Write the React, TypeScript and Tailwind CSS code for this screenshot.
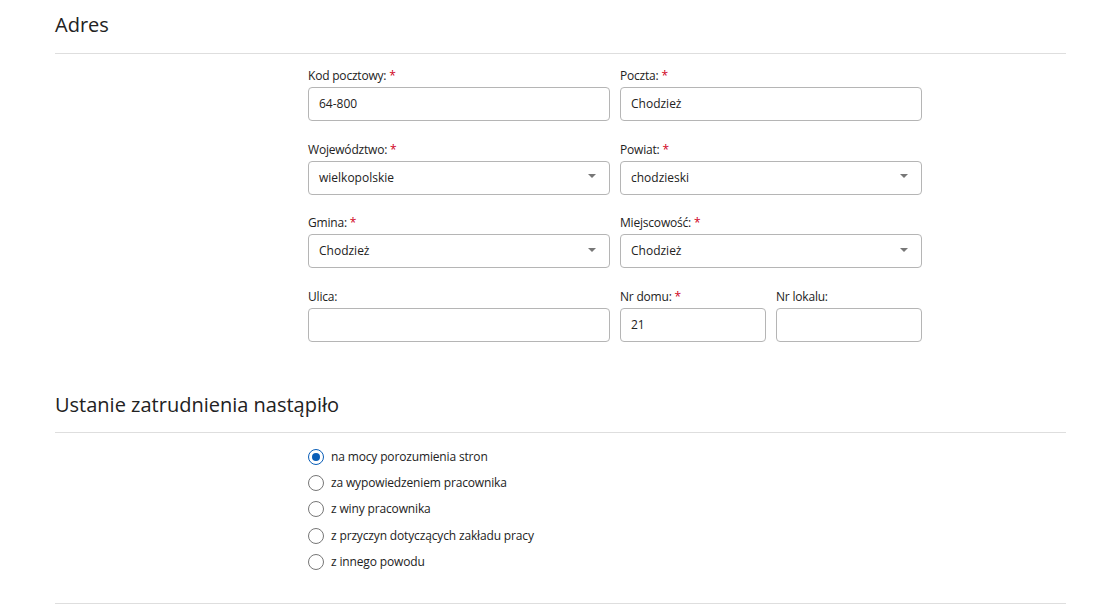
import React from "react";

const font = { fontFamily: '"Open Sans", "Noto Sans", sans-serif' };

function Label({ text, req }: { text: string; req?: boolean }) {
  return (
    <div className="text-[12px] leading-[16px] text-[#222] mb-[3px] tracking-[-0.2px]">
      {text}
      {req && <span className="text-[#d0021b]"> *</span>}
    </div>
  );
}

function Input({ value }: { value?: string }) {
  return (
    <div className="h-[34px] border border-[#b5b5b5] rounded-[4px] px-[10px] flex items-center text-[12px] text-[#222] bg-white">
      {value}
    </div>
  );
}

function Select({ value }: { value: string }) {
  return (
    <div className="h-[34px] border border-[#b5b5b5] rounded-[4px] pl-[10px] pr-[13px] flex items-center justify-between text-[12px] text-[#222] bg-white">
      <span>{value}</span>
      <svg width="8" height="4" viewBox="0 0 8 4" className="-mt-[3px]">
        <path d="M0 0 L8 0 L4 4 Z" fill="#777" />
      </svg>
    </div>
  );
}

function Radio({ label, checked }: { label: string; checked?: boolean }) {
  return (
    <div className="h-[26.3px] flex items-center gap-[7px]">
      {checked ? (
        <span className="w-[16px] h-[16px] rounded-full border-[1.5px] border-[#0a5eb8] flex items-center justify-center">
          <span className="w-[8px] h-[8px] rounded-full bg-[#0a5eb8]" />
        </span>
      ) : (
        <span className="w-[16px] h-[16px] rounded-full border border-[#777]" />
      )}
      <span className="text-[12px] text-[#222] tracking-[-0.15px]">{label}</span>
    </div>
  );
}

export default function App() {
  return (
    <div className="w-[1118px] h-[605px] bg-white overflow-hidden" style={font}>
      <div className="ml-[55px] w-[1011px]">
        <div className="pt-[11px] pb-[14px] border-b border-[#dedede]">
          <h2 className="text-[20px] leading-[28px] text-[#222]">Adres</h2>
        </div>
        <div className="ml-[253px] w-[614px] pt-[14px] flex flex-col gap-[20.5px]">
          <div className="grid grid-cols-2 gap-x-[10px]">
            <div>
              <Label text="Kod pocztowy:" req />
              <Input value="64-800" />
            </div>
            <div>
              <Label text="Poczta:" req />
              <Input value="Chodzież" />
            </div>
          </div>
          <div className="grid grid-cols-2 gap-x-[10px]">
            <div>
              <Label text="Województwo:" req />
              <Select value="wielkopolskie" />
            </div>
            <div>
              <Label text="Powiat:" req />
              <Select value="chodzieski" />
            </div>
          </div>
          <div className="grid grid-cols-2 gap-x-[10px]">
            <div>
              <Label text="Gmina:" req />
              <Select value="Chodzież" />
            </div>
            <div>
              <Label text="Miejscowość:" req />
              <Select value="Chodzież" />
            </div>
          </div>
          <div className="grid grid-cols-2 gap-x-[10px]">
            <div>
              <Label text="Ulica:" />
              <Input />
            </div>
            <div className="grid grid-cols-2 gap-x-[10px]">
              <div>
                <Label text="Nr domu:" req />
                <Input value="21" />
              </div>
              <div>
                <Label text="Nr lokalu:" />
                <Input />
              </div>
            </div>
          </div>
        </div>
        <div className="mt-[49px] pb-[13px] border-b border-[#dedede]">
          <h2 className="text-[20px] leading-[28px] text-[#222]">Ustanie zatrudnienia nastąpiło</h2>
        </div>
        <div className="pt-[11px] pb-[28px] border-b border-[#dedede]">
          <div className="ml-[253px]">
            <Radio label="na mocy porozumienia stron" checked />
            <Radio label="za wypowiedzeniem pracownika" />
            <Radio label="z winy pracownika" />
            <Radio label="z przyczyn dotyczących zakładu pracy" />
            <Radio label="z innego powodu" />
          </div>
        </div>
      </div>
    </div>
  );
}
